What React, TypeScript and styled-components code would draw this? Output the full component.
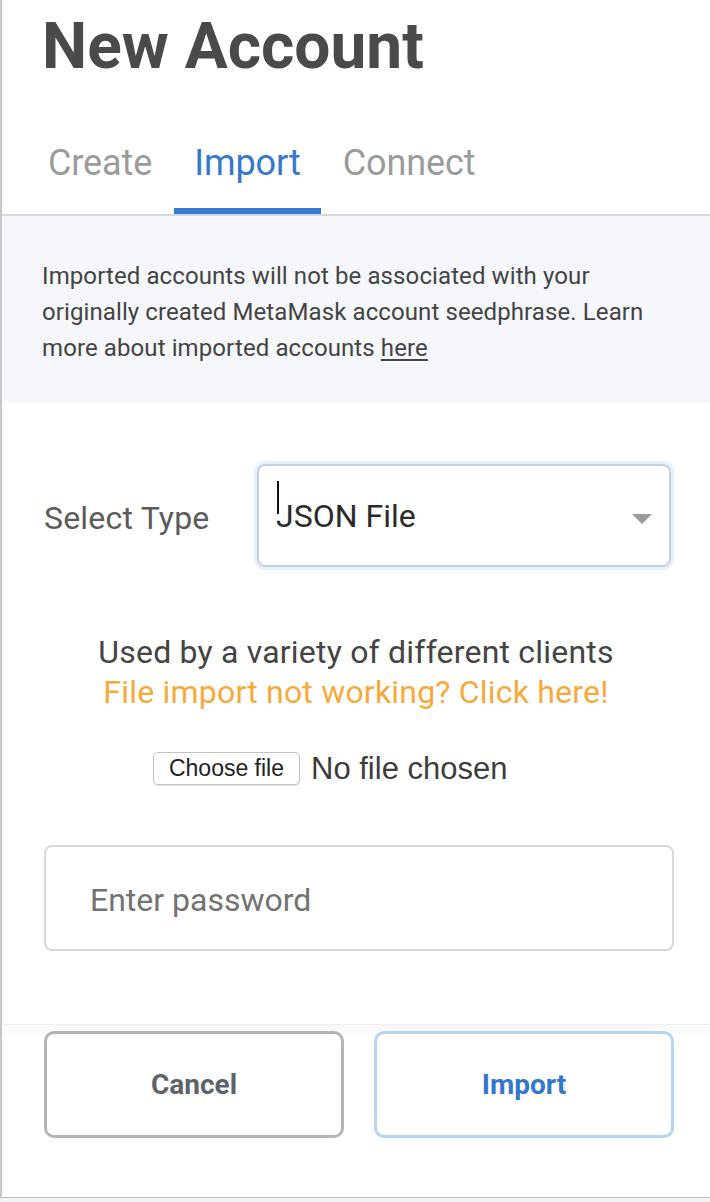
import React from "react";
import styled, { createGlobalStyle } from "styled-components";

const GlobalStyle = createGlobalStyle`
  html, body {
    margin: 0;
    padding: 0;
    background: #ececec;
  }
  * {
    box-sizing: border-box;
  }
`;

const tabs = ["Create", "Import", "Connect"];

const App = () => {
  return (
    <>
      <GlobalStyle />
      <Page>
        <Panel>
          <Header>
            <Title>New Account</Title>
          </Header>

          <TabBar>
            {tabs.map((t) => (
              <Tab key={t} $active={t === "Import"}>
                {t}
              </Tab>
            ))}
          </TabBar>

          <Notice>
            Imported accounts will not be associated with your originally created MetaMask account
            seedphrase. Learn more about imported accounts <NoticeLink>here</NoticeLink>
          </Notice>

          <SelectRow>
            <SelectLabel>Select Type</SelectLabel>
            <SelectBox>
              <Caret />
              <SelectValue>JSON File</SelectValue>
              <Arrow />
            </SelectBox>
          </SelectRow>

          <Description>
            <DescLine>Used by a variety of different clients</DescLine>
            <WarnLine>File import not working? Click here!</WarnLine>
          </Description>

          <FileRow>
            <ChooseButton>Choose file</ChooseButton>
            <FileStatus>No file chosen</FileStatus>
          </FileRow>

          <PasswordBox>
            <PasswordInput type="password" placeholder="Enter password" />
          </PasswordBox>

          <Footer>
            <FooterButton $variant="cancel">Cancel</FooterButton>
            <FooterButton $variant="primary">Import</FooterButton>
          </Footer>
        </Panel>
        <BottomStrip />
      </Page>
    </>
  );
};

export default App;

const Page = styled.div`
  width: 710px;
  height: 1202px;
  display: flex;
  flex-direction: column;
  overflow: hidden;
  font-family: Roboto, "Noto Sans", sans-serif;
`;

const Panel = styled.div`
  height: 1198px;
  display: flex;
  flex-direction: column;
  background: #ffffff;
  border-left: 2px solid #c6c6c6;
  border-bottom: 1px solid #bdbdbd;
`;

const BottomStrip = styled.div`
  flex: 1;
  background: #f2f2f2;
`;

const Header = styled.div`
  padding: 9px 0 0 40px;
`;

const Title = styled.h1`
  margin: 0;
  font-size: 64px;
  line-height: 76px;
  font-weight: 700;
  color: #4a4a4a;
`;

const TabBar = styled.div`
  display: flex;
  margin-top: 35px;
  padding-left: 26px;
  gap: 2px;
  border-bottom: 2px solid #d6d9dc;
`;

const Tab = styled.div<{ $active?: boolean }>`
  padding: 22px 20px 24px;
  font-size: 36px;
  line-height: 42px;
  letter-spacing: -0.1px;
  color: ${(p) => (p.$active ? "#3479cd" : "#9b9b9b")};
  border-bottom: 6px solid ${(p) => (p.$active ? "#3479cd" : "transparent")};
`;

const Notice = styled.div`
  padding: 42px 42px 37px 40px;
  background: #f5f7fa;
  font-size: 24px;
  line-height: 36px;
  letter-spacing: 0.1px;
  color: #444444;
`;

const NoticeLink = styled.span`
  text-decoration: underline;
  text-underline-offset: 3px;
`;

const SelectRow = styled.div`
  display: flex;
  align-items: center;
  padding: 61px 39px 0 42px;
`;

const SelectLabel = styled.div`
  width: 213px;
  flex-shrink: 0;
  font-size: 32px;
  letter-spacing: 0.2px;
  color: #5b5b5b;
  padding-top: 4px;
`;

const SelectBox = styled.div`
  position: relative;
  flex: 1;
  height: 103px;
  display: flex;
  align-items: center;
  padding: 0 17px 0 17px;
  border: 2px solid #c3d1e5;
  border-radius: 8px;
  box-shadow: 0 0 0 3px #e6f0fc;
`;

const Caret = styled.span`
  position: absolute;
  left: 18px;
  top: 15px;
  width: 2px;
  height: 33px;
  background: #111111;
`;

const SelectValue = styled.div`
  flex: 1;
  font-size: 32px;
  color: #2a2a2a;
`;

const Arrow = styled.span`
  width: 0;
  height: 0;
  margin-top: 6px;
  border-left: 10px solid transparent;
  border-right: 10px solid transparent;
  border-top: 10px solid #9b9b9b;
`;

const Description = styled.div`
  margin-top: 65px;
  text-align: center;
  font-size: 32px;
  line-height: 40px;
  letter-spacing: 0.2px;
`;

const DescLine = styled.div`
  color: #444444;
`;

const WarnLine = styled.div`
  color: #f6aa3c;
`;

const FileRow = styled.div`
  width: 406px;
  height: 33px;
  margin: 40px auto 0;
  display: flex;
  align-items: center;
  gap: 11px;
  font-family: "Liberation Sans", Arial, sans-serif;
`;

const ChooseButton = styled.button`
  height: 33px;
  width: 147px;
  padding: 0;
  font-family: "Liberation Sans", Arial, sans-serif;
  font-size: 23px;
  color: #222222;
  background: #ffffff;
  border: 1px solid #c2c2c2;
  border-radius: 5px;
  box-shadow: 0 1px 1px rgba(0, 0, 0, 0.12);
`;

const FileStatus = styled.span`
  font-size: 31px;
  line-height: 33px;
  color: #3d3d3d;
`;

const PasswordBox = styled.div`
  margin: 60px 36px 0 42px;
  height: 106px;
  display: flex;
  align-items: center;
  border: 2px solid #d4d9de;
  border-radius: 8px;
  padding: 4px 0 0 42px;
`;

const PasswordInput = styled.input`
  width: 100%;
  border: none;
  outline: none;
  background: transparent;
  font-family: Roboto, sans-serif;
  font-size: 32px;
  color: #333333;

  &::placeholder {
    color: #737373;
  }
`;

const Footer = styled.div`
  flex: 1;
  margin-top: 73px;
  display: flex;
  align-items: flex-start;
  gap: 30px;
  padding: 6px 36px 0 42px;
  border-top: 1px solid #f0f0f0;
  background: linear-gradient(#f8f8f8, #ffffff 14px);
`;

const FooterButton = styled.button<{ $variant: "cancel" | "primary" }>`
  flex: 1;
  height: 107px;
  background: #ffffff;
  border: 3px solid ${(p) => (p.$variant === "primary" ? "#b7d5f2" : "#b4b4b4")};
  border-radius: 10px;
  font-family: Roboto, sans-serif;
  font-size: 28px;
  font-weight: 700;
  color: ${(p) => (p.$variant === "primary" ? "#3378cc" : "#5c636b")};
`;
